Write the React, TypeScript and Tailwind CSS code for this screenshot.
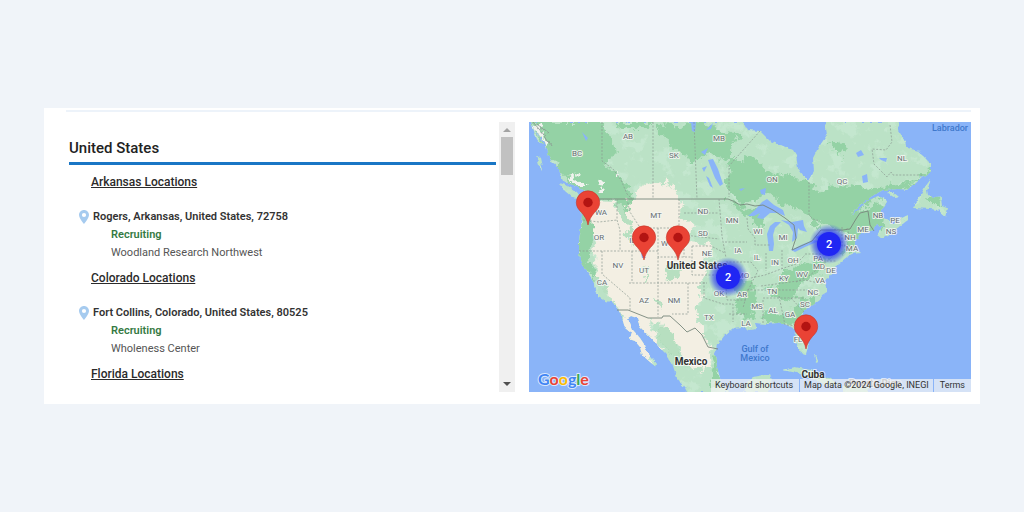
type Site = {
  id: string;
  state: string;
  address: string;
  status: string;
  facility: string;
};

type MapLabel = [text: string, x: number, y: number];

const sites: Site[] = [
  {
    id: "rogers",
    state: "Arkansas Locations",
    address: "Rogers, Arkansas, United States, 72758",
    status: "Recruiting",
    facility: "Woodland Research Northwest"
  },
  {
    id: "fort-collins",
    state: "Colorado Locations",
    address: "Fort Collins, Colorado, United States, 80525",
    status: "Recruiting",
    facility: "Wholeness Center"
  }
];

const regionLabels: MapLabel[] = [
  ["AB", 99, 14], ["BC", 48, 31], ["SK", 145, 33], ["MB", 190, 16], ["ON", 243, 57],
  ["QC", 313, 59], ["NL", 373, 36], ["NB", 349, 93], ["PE", 366, 98], ["NS", 362, 109],
  ["ME", 334, 107], ["NH", 321, 115], ["MA", 323, 126], ["WA", 72, 90], ["OR", 70, 115],
  ["MT", 127, 93], ["ID", 104, 118], ["WY", 138, 121], ["ND", 174, 89], ["SD", 174, 111],
  ["NE", 178, 131], ["MN", 203, 98], ["IA", 209, 128], ["WI", 229, 109], ["MI", 254, 115],
  ["NV", 89, 143], ["UT", 115, 148], ["CA", 73, 160], ["AZ", 115, 178], ["NM", 145, 178],
  ["OK", 190, 171], ["TX", 180, 195], ["MO", 214, 153], ["AR", 213, 172], ["IL", 228, 135],
  ["IN", 246, 140], ["OH", 264, 138], ["KY", 255, 156], ["WV", 273, 152], ["TN", 243, 169],
  ["MS", 228, 184], ["AL", 244, 188], ["GA", 261, 192], ["LA", 217, 201], ["SC", 276, 182],
  ["NC", 284, 170], ["VA", 291, 158], ["MD", 290, 144], ["PA", 289, 136], ["DE", 302, 148],
  ["FL", 269, 217]
];

const pins = [
  { x: 59, y: 103 },
  { x: 115, y: 138 },
  { x: 149, y: 138 },
  { x: 277, y: 227 }
];

const clusters = [
  { x: 300, y: 122, count: 2 },
  { x: 199, y: 155, count: 2 }
];

const mainland =
  "M1 0L6 8L11 14L16 20L19 29L21 39L29 46L34 58L41 62L48 64L59 72L61 78L56 79L49 79L51 86L53 93L52 106L50 118L50 129L51 138L54 145L59 151L64 158L66 167L69 175L76 179L83 180L88 185L93 196L96 206L102 211L100 217L106 219L111 225L113 233L121 240L126 244L127 241L118 230L115 222L111 216L104 208L99 196L102 194L108 196L111 205L119 213L128 223L136 231L143 241L146 250L148 256L156 266L158 270L200 270L192 262L191 256L188 245L186 233L188 223L196 213L204 206L213 205L220 208L228 207L226 201L238 202L248 201L258 203L266 208L265 220L269 226L273 231L277 232L279 225L277 216L273 208L271 196L274 190L284 183L291 178L293 173L298 170L298 165L295 158L299 156L304 150L308 143L318 135L323 132L331 131L326 127L326 118L331 113L337 110L344 108L348 103L354 104L348 113L353 117L363 111L371 104L379 98L379 93L373 96L363 99L354 96L351 89L356 84L358 78L349 74L338 79L329 88L322 94L331 83L343 74L354 68L369 67L378 68L386 61L394 54L401 51L401 41L394 34L388 29L394 30L378 26L375 18L369 9L370 0L296 0L298 13L294 19L289 26L284 36L285 49L279 59L274 53L269 46L267 33L264 28L254 24L241 19L231 9L218 8L214 0Z";

const islands =
  "M31 61L39 64L48 70L52 79L44 76L36 69Z M4 6L9 13L14 22L9 20Z M7 33L11 36L14 49L10 43Z M402 57L396 65L391 74L384 86L401 87L409 88L416 94L418 86L413 84L412 74L404 76L399 73L398 68Z M358 70L364 70L370 75L366 76Z M361 97L368 99L371 97L369 101L363 101Z M254 248L266 245L281 248L291 253L302 257L310 263L296 263L286 257L268 251Z M314 262L324 260L342 265L338 270L314 270Z M218 260L224 255L241 252L243 257L239 270L214 270Z M285 232L289 239L287 240Z";

const drylands =
  "M64 80L86 81L93 96L102 104L98 78L110 76L108 68L113 61L126 58L134 64L142 60L151 76L154 93L161 105L160 119L181 121L184 130L174 136L176 153L169 164L171 180L164 194L174 210L183 226L181 240L174 252L166 246L155 238L149 224L138 212L132 200L122 199L126 215L134 230L120 228L126 246L110 235L96 209L88 184L80 178L76 166L67 152L66 136L68 124L62 110Z";

const forests =
  "M0 0L72 0L82 14L86 34L76 44L90 52L103 70L108 84L106 104L98 100L94 84L80 78L62 76L45 64L30 46L18 34Z M84 0L124 0L110 8L92 6Z M126 4L168 2L212 14L198 40L178 32L160 38L140 22Z M200 40L218 34L242 50L276 58L288 74L284 92L292 108L268 88L238 70L216 84L198 74Z M282 68L318 62L344 68L390 58L400 44L400 54L370 70L344 76L324 94L350 78L358 86L352 108L326 116L300 104L282 96Z M201 80L224 88L238 98L232 106L212 90Z M51 82L60 84L64 104L62 126L60 138L51 144Z M52 138L64 146L72 158L66 162L56 150Z M252 150L284 138L300 136L290 150L272 164L266 176L248 180L236 168L252 162Z M204 160L222 162L230 176L220 196L206 190L208 176Z M228 192L262 190L272 178L290 172L276 188L268 202L240 200Z M318 112L330 108L326 126L312 134Z M94 110L106 108L108 128L98 132Z M134 142L146 140L150 160L140 166L134 154Z M126 206L134 204L146 216L150 240L136 226Z M186 232L190 246L196 264L180 266L180 250Z M300 20L310 18L316 34L306 30Z M396 76L410 76L412 82L400 82Z";

const lakes =
  "M219 94L226 88L233 80L238 77L245 83L254 88L256 94L249 91L241 91L234 97L228 96L231 91L225 94Z M241 104L246 100L252 100L246 106L244 113L245 122L244 129L240 129L239 120L238 112Z M252 98L263 100L274 98L275 104L278 110L271 108L269 106L268 116L263 120L264 110L260 103Z M262 128L272 123L284 118L290 119L276 125L266 130Z M286 115L296 111L298 114L290 118Z M179 38L184 37L189 47L194 62L191 64L186 56L182 46Z M173 46L178 44L175 50Z M177 54L180 56L184 66L181 64Z M162 0L167 0L166 10L163 9Z M210 67L216 66L212 69Z M231 68L237 66L236 73L232 72Z M112 130L117 136L113 136Z M53 10L59 16L57 19Z M327 31L332 28L335 33L329 35Z M333 54L338 52L339 60L334 61Z M350 36L358 36L357 40L352 38Z M177 8L184 1L182 7Z M172 30L179 26L176 33Z";

const internationalBorders =
  "M61 77H199L204 79L211 83L218 82L226 84L234 83L244 88L256 96L265 103L267 116L263 128L283 119L292 108H314L321 107L327 97L331 91L339 89L341 103L345 109 M88 188L99 188L119 196H133L134 194H141L151 203L158 210L166 206L173 213L179 225L189 227";

const stateBorders =
  "M73 0V39L84 47L92 58L98 72L103 77 M124 0V77 M165 0L168 77 M231 9L200 44V75 M280 60V93L284 97L291 99 M361 3L363 20L357 28L343 27L345 42L358 55L362 50L364 53H394 M88 77V98L91 108V129 M54 98L70 100L88 98 M50 129H129 M73 129V152L101 176V188 M98 77L101 90L110 104V112 M110 106H150 M150 77V120 M155 91H190 M155 113L190 117 M190 77L193 114L197 136 M129 106V135H163 M103 129V161 M100 161H178 M129 135V195 M163 124V153H196 M155 120V135 M163 124H182L196 131 M159 161V192H143 M175 160V176L194 182H204V200 M196 120H218 M218 96L219 107L226 116L226 123H242 M197 140H222L229 149L223 160L218 171L214 186 M196 153L198 178L218 178 M200 192H218 M218 168H284 M232 164L276 158L294 162 M237 131V149 M253 128V147 M222 156L236 153L252 147L267 142L276 133 M234 178V202 M250 174L256 203 M234 176L276 176 M262 176L275 190 M258 203L270 204 M267 160L280 154L292 144 M276 132H296 M296 148V139H307 M313 105V124H325 M318 106L322 119 M315 123L325 126";

function LocationIcon() {
  return (
    <svg viewBox="0 0 10 14" className="h-3.5 w-2.5 shrink-0" aria-hidden="true">
      <path
        d="M5 0C2.2 0 0 2.2 0 5c0 3.4 5 9 5 9s5-5.600 5-9c0-2.800-2.200-5-5-5Zm0 2.900a2.100 2.100 0 1 1 0 4.200 2.100 2.100 0 0 1 0-4.200Z"
        fill="#a6cbef"
        fillRule="evenodd"
      />
    </svg>
  );
}

function SiteEntry({ site }: { site: Site }) {
  return (
    <section className="mb-[7px]">
      <h3 className="pl-[22px] text-xs font-medium leading-[18px] text-[#2b2b2b] underline">{site.state}</h3>
      <div className="mt-[17px] flex items-center gap-1 pl-2.5">
        <LocationIcon />
        <p className="text-[11px] font-semibold leading-[18px] text-[#333]">{site.address}</p>
      </div>
      <p className="pl-[42px] text-[11px] font-semibold leading-[18px] text-[#357a43]">{site.status}</p>
      <p className="pl-[42px] text-[11px] leading-[18px] text-[#555]">{site.facility}</p>
    </section>
  );
}

function ScrollTrack() {
  return (
    <div className="flex w-4 shrink-0 flex-col items-center bg-[#f0f0f0]">
      <button type="button" aria-label="Scroll up" className="flex h-[15px] w-full items-center justify-center">
        <svg viewBox="0 0 8 4" className="h-1 w-2" aria-hidden="true">
          <path d="M0 4L4 0L8 4Z" fill="#a3a3a3" />
        </svg>
      </button>
      <div className="h-[38px] w-3 bg-[#c1c1c1]" />
      <button type="button" aria-label="Scroll down" className="mt-auto flex h-4 w-full items-center justify-center">
        <svg viewBox="0 0 8 4" className="h-1 w-2" aria-hidden="true">
          <path d="M0 0H8L4 4Z" fill="#505050" />
        </svg>
      </button>
    </div>
  );
}

function Pin({ x, y }: { x: number; y: number }) {
  return (
    <g transform={`translate(${x} ${y})`}>
      <path
        d="M0 0C-1-5.500-3.500-9-6.500-12.500C-9.500-15.500-11.700-18.200-11.700-22.500A11.700 11.700 0 0 1 11.700-22.500C11.700-18.200 9.500-15.500 6.500-12.500C3.500-9 1-5.500 0 0Z"
        fill="#ea4335"
        stroke="#c5372c"
        strokeWidth="0.600"
      />
      <circle cy="-22.500" r="4.700" fill="#b31412" />
    </g>
  );
}

function Cluster({ x, y, count }: { x: number; y: number; count: number }) {
  return (
    <g transform={`translate(${x} ${y})`}>
      <circle r="20" fill="url(#clusterHalo)" />
      <circle r="12" fill="#2026f3" />
      <text y="4" textAnchor="middle" fontSize="11" fontWeight="500" fill="#fff">
        {count}
      </text>
    </g>
  );
}

function LocationsMap() {
  return (
    <div className="relative overflow-hidden bg-[#8ab4f8]">
      <svg
        viewBox="0 0 442 270"
        preserveAspectRatio="xMidYMid slice"
        className="block h-full w-full"
        fontFamily="Roboto, sans-serif"
        role="img"
        aria-label="Map of study locations"
      >
        <defs>
          <clipPath id="land">
            <path d={`${mainland} ${islands}`} />
          </clipPath>
          <filter id="rough" x="-5%" y="-5%" width="110%" height="110%">
            <feTurbulence type="fractalNoise" baseFrequency="0.090" numOctaves="4" seed="4" />
            <feDisplacementMap in="SourceGraphic" scale="16" xChannelSelector="R" yChannelSelector="G" />
          </filter>
          <filter id="coast" x="-5%" y="-5%" width="110%" height="110%">
            <feTurbulence type="fractalNoise" baseFrequency="0.200" numOctaves="2" seed="9" />
            <feDisplacementMap in="SourceGraphic" scale="4" xChannelSelector="R" yChannelSelector="G" />
          </filter>
          <filter id="speckle" x="0" y="0" width="100%" height="100%">
            <feTurbulence type="fractalNoise" baseFrequency="0.070" numOctaves="4" seed="12" />
            <feColorMatrix values="0 0 0 0 0.580  0 0 0 0 0.820  0 0 0 0 0.650  9 0 0 0 -4.900" />
          </filter>
          <radialGradient id="clusterHalo">
            <stop offset="0.500" stopColor="#2026f3" stopOpacity="0.850" />
            <stop offset="0.750" stopColor="#2c3cf0" stopOpacity="0.500" />
            <stop offset="1" stopColor="#3b55f0" stopOpacity="0" />
          </radialGradient>
        </defs>

        <rect width="442" height="270" fill="#8ab4f8" />
        <g filter="url(#coast)">
          <g clipPath="url(#land)">
            <rect width="442" height="270" fill="#bbe2c6" />
            <rect width="442" height="270" filter="url(#speckle)" opacity="0.700" />
            <path d={forests} fill="#94d2a5" filter="url(#rough)" />
            <path d={drylands} fill="#f3efe3" filter="url(#rough)" />
            <path
              d="M88 80L96 84L104 104L98 108L90 94Z M136 140L148 138L150 152L142 162L136 150Z M126 206L134 204L146 216L150 240L136 226Z M96 108L106 110L104 124Z M112 148L118 146L116 158Z M124 180L134 182L132 186Z M60 150L70 156L80 168L76 172Z"
              fill="#b7dfc0"
              filter="url(#rough)"
            />
            <path
              d="M0 0L10 4L20 20L16 22Z M38 52L50 56L60 62L50 62Z M84 48L92 52L90 56Z M68 62L74 66L70 70Z"
              fill="#f1f3ef"
              filter="url(#rough)"
            />
            <path d="M4 0L16 14L22 24M8 2L20 12" fill="none" stroke="#8a9690" strokeWidth="0.800" />
          </g>
        </g>
        <path d={lakes} fill="#8ab4f8" />
        <path d={internationalBorders} fill="none" stroke="#77877c" strokeWidth="0.900" />
        <path d={stateBorders} fill="none" stroke="#8b9990" strokeWidth="0.700" strokeDasharray="2 1.500" />

        <g
          fontSize="8"
          fill="#686e72"
          stroke="#f5f8f4"
          strokeWidth="2"
          strokeOpacity="0.850"
          strokeLinejoin="round"
          paintOrder="stroke"
          textAnchor="middle"
        >
          {regionLabels.map(([text, x, y]) => (
            <text key={text} x={x} y={y + 3}>
              {text}
            </text>
          ))}
        </g>
        <g fontSize="9" fill="#3f78cc" textAnchor="middle" fontWeight="500">
          <text x="226" y="230">Gulf of</text>
          <text x="226" y="239">Mexico</text>
          <text x="421" y="9">Labrador</text>
        </g>
        <g
          fontSize="10"
          fontWeight="700"
          fill="#333"
          stroke="#fff"
          strokeWidth="2"
          strokeOpacity="0.700"
          paintOrder="stroke"
          textAnchor="middle"
        >
          <text x="168" y="147">United States</text>
          <text x="162" y="243">Mexico</text>
          <text x="284" y="256">Cuba</text>
          <text x="346" y="265" fill="#777">Puerto Rico</text>
        </g>

        {pins.map((pin) => (
          <Pin key={`${pin.x}-${pin.y}`} x={pin.x} y={pin.y} />
        ))}
        {clusters.map((cluster) => (
          <Cluster key={cluster.x} x={cluster.x} y={cluster.y} count={cluster.count} />
        ))}

        <a href="#google" aria-label="Google">
          <text
            x="9"
            y="263"
            fontFamily="Lato, sans-serif"
            fontSize="16"
            fontWeight="700"
            stroke="#fff"
            strokeWidth="2"
            strokeOpacity="0.700"
            strokeLinejoin="round"
            paintOrder="stroke"
          >
            <tspan fill="#4285f4">G</tspan>
            <tspan fill="#ea4335">o</tspan>
            <tspan fill="#fbbc04">o</tspan>
            <tspan fill="#4285f4">g</tspan>
            <tspan fill="#34a853">l</tspan>
            <tspan fill="#ea4335">e</tspan>
          </text>
        </a>
      </svg>

      <div className="absolute bottom-0 right-0 flex gap-px whitespace-nowrap text-[9px] leading-[13px] text-[#333]">
        <button type="button" className="bg-[#f5f5f5]/70 pl-1 pr-1.5">
          Keyboard shortcuts
        </button>
        <span className="bg-[#f5f5f5]/70 px-1">Map data ©2024 Google, INEGI</span>
        <a href="#terms" className="bg-[#f5f5f5]/70 px-1.5">
          Terms
        </a>
      </div>
    </div>
  );
}

export default function App() {
  return (
    <main className="flex min-h-screen items-center bg-[#f0f4f9] px-11 font-[Roboto,sans-serif]">
      <div className="w-full bg-white pb-3 pl-[22px] pr-[9px] pt-0.5">
        <hr className="border-t-2 border-[#edf3fa]" />
        <div className="mt-2.5 grid grid-cols-[449fr_442fr] gap-3.5">
          <div className="flex min-w-0 gap-[3px] pl-[3px]">
            <div className="min-w-0 flex-1 pt-4">
              <h2 className="border-b-3 border-[#1976c5] pb-1 text-[15px] font-medium leading-5 text-[#222]">
                United States
              </h2>
              <div className="pt-2">
                {sites.map((site) => (
                  <SiteEntry key={site.id} site={site} />
                ))}
                <h3 className="pb-[9px] pl-[22px] text-xs font-medium leading-[18px] text-[#2b2b2b] underline">
                  Florida Locations
                </h3>
              </div>
            </div>
            <ScrollTrack />
          </div>
          <LocationsMap />
        </div>
      </div>
    </main>
  );
}
